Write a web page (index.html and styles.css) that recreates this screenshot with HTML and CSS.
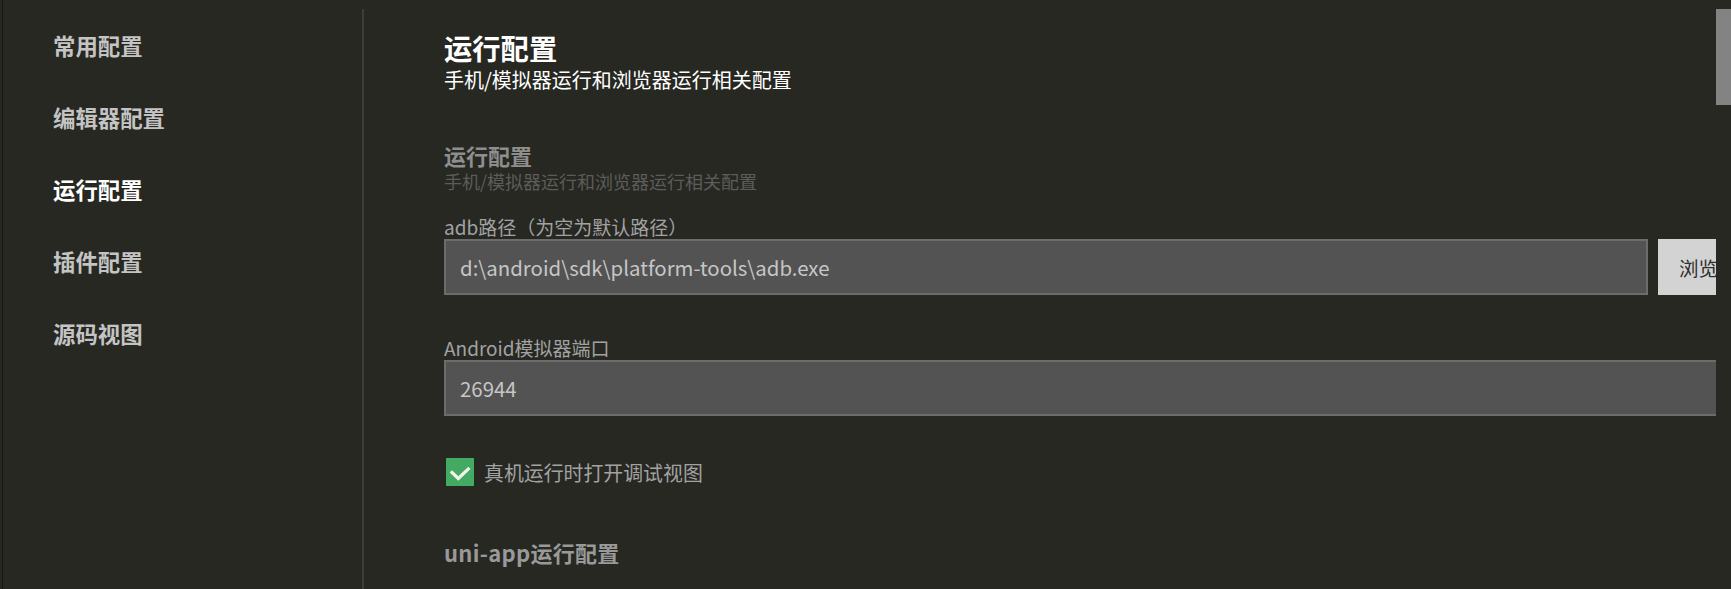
FILE: index.html
```html
<!DOCTYPE html>
<html lang="zh-CN">
<head>
    <meta charset="UTF-8">
    <meta name="viewport" content="width=device-width, initial-scale=1.0">
    <title>设置</title>
    <link rel="stylesheet" href="styles.css">
</head>
<body>
    <div class="window">
        <ul class="sidebar">
            <li>常用配置</li>
            <li>编辑器配置</li>
            <li class="active">运行配置</li>
            <li>插件配置</li>
            <li>源码视图</li>
        </ul>

        <div class="main">
            <div class="scroll">
                <h1 class="page-title">运行配置</h1>
                <p class="page-desc">手机/模拟器运行和浏览器运行相关配置</p>

                <h2 class="group-title">运行配置</h2>
                <p class="group-desc">手机/模拟器运行和浏览器运行相关配置</p>

                <div class="field">
                    <label class="field-label">adb路径（为空为默认路径）</label>
                    <div class="field-row">
                        <input class="text-input" type="text" value="d:\android\sdk\platform-tools\adb.exe">
                        <button class="browse">浏览</button>
                    </div>
                </div>

                <div class="field field-port">
                    <label class="field-label">Android模拟器端口</label>
                    <div class="field-row">
                        <input class="text-input" type="text" value="26944">
                    </div>
                </div>

                <label class="check-row">
                    <span class="checkbox">
                        <svg width="28" height="28" viewBox="0 0 28 28">
                            <polyline points="6,14.5 12.3,20.5 22.3,11" fill="none" stroke="#f4f4ea" stroke-width="3.2" stroke-linecap="square"/>
                        </svg>
                    </span>
                    真机运行时打开调试视图
                </label>

                <h2 class="group-title uni">uni-app运行配置</h2>
            </div>
            <div class="scrollbar"><div class="thumb"></div></div>
        </div>
    </div>
</body>
</html>
```

FILE: styles.css
```css
html, body {
    margin: 0;
    height: 100%;
}
body {
    background-color: #272822;
    font-family: "Noto Sans CJK SC", "Noto Sans", sans-serif;
    overflow: hidden;
}
.window {
    display: flex;
    height: 100%;
    margin-left: 2px;
    border-left: 1px solid #161613;
}
.sidebar {
    list-style: none;
    margin: 9px 0 0 0;
    padding: 0 0 0 50px;
    width: 309px;
    border-right: 2px solid #3d3d39;
}
.sidebar li {
    font-size: 22.4px;
    font-weight: bold;
    line-height: 72px;
    color: #c4c4c4;
}
.sidebar li.active {
    color: #ffffff;
}
.main {
    flex: 1;
    display: flex;
    padding-top: 9px;
    min-width: 0;
}
.scroll {
    flex: 1;
    overflow: hidden;
    padding-left: 80px;
}
.scrollbar {
    width: 15px;
}
.thumb {
    height: 96px;
    background-color: #838383;
}
.page-title {
    margin: 22px 0 0 0;
    font-size: 28.3px;
    line-height: 34px;
    color: #ffffff;
}
.page-desc {
    margin: 2px 0 0 0;
    font-size: 20px;
    line-height: 26px;
    color: #ffffff;
}
.group-title {
    margin: 48px 0 0 0;
    font-size: 22px;
    line-height: 28px;
    color: #8e8e8e;
}
.group-desc {
    margin: 0;
    font-size: 18px;
    line-height: 24px;
    color: #5c5c5a;
}
.field {
    margin-top: 22px;
    width: 1294px;
}
.field-port {
    margin-top: 41px;
}
.field-label {
    display: block;
    font-size: 19px;
    line-height: 24px;
    color: #a2a2a2;
}
.field-row {
    display: flex;
    gap: 10px;
}
.text-input {
    flex: 1;
    height: 56px;
    box-sizing: border-box;
    padding: 0 14px;
    background-color: #535353;
    border: 2px solid #6c6c6c;
    color: #c6c6c6;
    font-family: "Noto Sans CJK SC", "Noto Sans", sans-serif;
    font-size: 20.4px;
    outline: none;
}
.browse {
    width: 80px;
    height: 56px;
    background-color: #d3d3d3;
    border: none;
    color: #2e2e2e;
    font-family: "Noto Sans CJK SC", sans-serif;
    font-size: 19.5px;
    text-align: left;
    padding-left: 21px;
}
.check-row {
    display: flex;
    align-items: center;
    gap: 10px;
    margin-top: 42px;
    margin-left: 2px;
    height: 28px;
    font-size: 19.9px;
    color: #a2a2a2;
}
.checkbox {
    width: 28px;
    height: 28px;
    background-color: #43aa64;
    display: block;
}
.checkbox svg {
    display: block;
}
.group-title.uni {
    margin-top: 52px;
    color: #999999;
    letter-spacing: 0.3px;
}
```
